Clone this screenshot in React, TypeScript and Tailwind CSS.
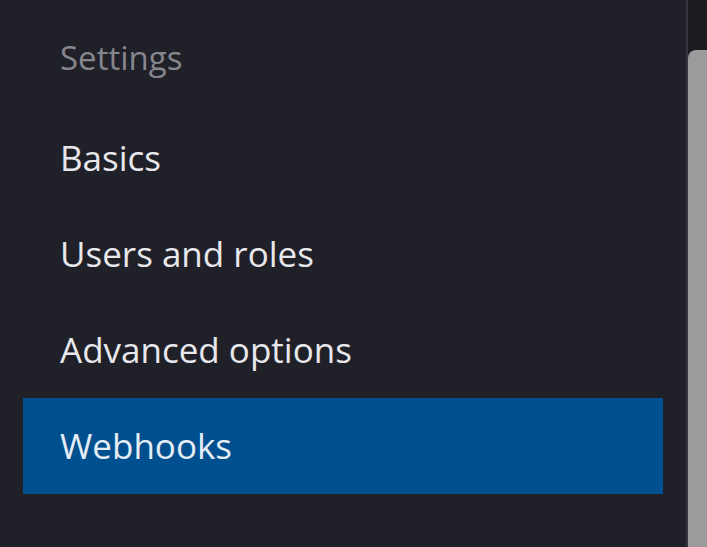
import React from "react";

const ITEMS = ["Basics", "Users and roles", "Advanced options", "Webhooks"];

export default function App() {
  const active = "Webhooks";
  return (
    <div
      className="flex h-[547px] w-[707px] overflow-hidden bg-[#202029]"
      style={{ fontFamily: "'Open Sans', 'Noto Sans', sans-serif" }}
    >
      <nav className="flex-1 pl-[23px] pr-[23px]">
        <h2 className="h-[110px] pl-[37px] pt-[36px] text-[33px] leading-[44px] text-[#86868e]">Settings</h2>
        <ul>
          {ITEMS.map((label) => (
            <li
              key={label}
              className={
                label === active
                  ? "flex h-[96px] items-center bg-[#00508f] pl-[37px] text-[35px] text-[#e4ecf5]"
                  : "flex h-[96px] items-center pl-[37px] text-[35px] text-[#e8e8ec]"
              }
            >
              {label}
            </li>
          ))}
        </ul>
      </nav>
      <div className="w-[2px] bg-[#34343c]" />
      <div className="flex w-[19px] flex-col bg-[#1b1b21]">
        <div className="h-[50px]" />
        <div className="flex-1 rounded-tl-[8px] bg-[#9b9b9b]" />
      </div>
    </div>
  );
}
